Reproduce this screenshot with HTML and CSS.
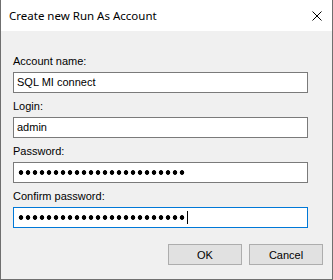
FILE: index.html
```html
<!DOCTYPE html>
<html>
<head>
<meta charset="utf-8">
<link rel="stylesheet" href="styles.css">
</head>
<body>
<div class="window">
  <div class="titlebar">
    <span class="title">Create new Run As Account</span>
    <svg class="close" width="10" height="10" viewBox="0 0 10 10"><path d="M0.5 0.5 L9.5 9.5 M9.5 0.5 L0.5 9.5" stroke="#000" stroke-width="1" fill="none"/></svg>
  </div>
  <div class="content">
    <div class="field">
      <div class="label">Account name:</div>
      <div class="input">SQL MI connect</div>
    </div>
    <div class="field">
      <div class="label">Login:</div>
      <div class="input">admin</div>
    </div>
    <div class="field">
      <div class="label">Password:</div>
      <div class="input"><span class="dots"></span></div>
    </div>
    <div class="field">
      <div class="label">Confirm password:</div>
      <div class="input focused"><span class="dots"></span><span class="caret"></span></div>
    </div>
    <div class="buttons">
      <div class="btn">OK</div>
      <div class="btn">Cancel</div>
    </div>
  </div>
</div>
</body>
</html>
```

FILE: styles.css
```css
html, body {
  margin: 0;
  padding: 0;
  background: #ffffff;
}
.window {
  width: 333px;
  height: 280px;
  box-sizing: border-box;
  border: 1px solid #6f6f6f;
  border-top: none;
  background: #f0f0f0;
  display: flex;
  flex-direction: column;
}
.titlebar {
  height: 31px;
  background: #ffffff;
  display: flex;
  align-items: center;
  padding-left: 8px;
  padding-right: 10px;
  justify-content: space-between;
}
.title {
  font-family: "Noto Sans", sans-serif;
  font-size: 11.5px;
  color: #000;
  margin-top: -1px;
}
.close {
  display: block;
}
.content {
  padding: 24px 0 0 12px;
  display: flex;
  flex-direction: column;
  gap: 7px;
  font-family: "Liberation Sans", Arial, sans-serif;
  font-size: 11px;
  color: #000;
}
.field {
  display: flex;
  flex-direction: column;
  gap: 4px;
}
.label {
  line-height: 13px;
  height: 13px;
}
.input {
  width: 295px;
  height: 21px;
  box-sizing: border-box;
  border: 1px solid #7a7a7a;
  background: #ffffff;
  padding: 0 3px;
  display: flex;
  align-items: center;
  line-height: 13px;
}
.input.focused {
  border-color: #0078d7;
}
.dots {
  display: block;
  width: 168px;
  height: 7px;
  margin-left: 1px;
  background: radial-gradient(circle at 3px 3.5px, #000 2px, transparent 2.6px) 0 0 / 7px 7px repeat-x;
}
.caret {
  display: block;
  width: 1px;
  height: 13px;
  background: #000;
  margin-left: 1px;
}
.buttons {
  display: flex;
  justify-content: flex-end;
  gap: 7px;
  padding-right: 9px;
  margin-top: 9px;
}
.btn {
  width: 74px;
  height: 21px;
  box-sizing: border-box;
  border: 1px solid #adadad;
  background: #e1e1e1;
  display: flex;
  align-items: center;
  justify-content: center;
}
```
